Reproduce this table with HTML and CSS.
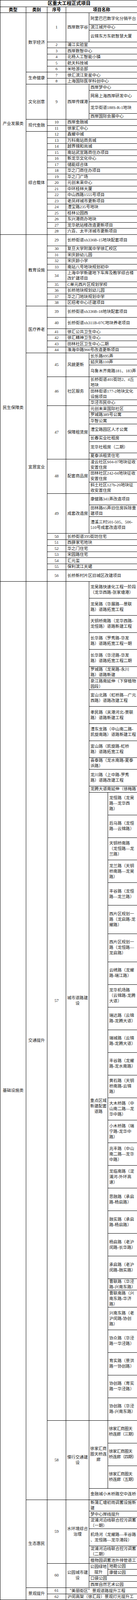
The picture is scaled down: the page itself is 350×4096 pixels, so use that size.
FILE: index.html
```html
<!DOCTYPE html>
<html lang="zh-CN">
<head>
<meta charset="utf-8">
<title>区重大工程正式项目</title>
<link rel="stylesheet" href="styles.css">
</head>
<body>
<table class="sheet">
<colgroup><col class="w1"><col class="w2"><col class="w3"><col class="w4"><col class="w5"><col class="w6"></colgroup>
<tbody>
<tr class="rt"><td colspan="6" class="title">区重大工程正式项目</td></tr>
<tr class="rh"><th>类型</th><th>类别</th><th>序号</th><th colspan="3">项目名称</th></tr>

<tr class="r2"><td rowspan="33" class="c">产业发展类</td><td rowspan="8" class="c">数字经济</td><td rowspan="3" class="c">1</td><td rowspan="3">西岸数字谷</td><td colspan="2">阿里巴巴数字化分销平台</td></tr>
<tr class="r1"><td colspan="2">滨江城开中心</td></tr>
<tr class="r2"><td colspan="2">云锦东方东航智慧大厦</td></tr>
<tr class="r1"><td class="c">2</td><td colspan="3">浦江实验室</td></tr>
<tr class="r1"><td class="c">3</td><td colspan="3">西岸数智中心</td></tr>
<tr class="r1"><td class="c">4</td><td colspan="3">北杨人工智能小镇</td></tr>
<tr class="r1"><td class="c">5</td><td colspan="3">航天科技城</td></tr>
<tr class="r1"><td class="c">6</td><td colspan="3">米哈游总部</td></tr>
<tr class="r1"><td rowspan="2" class="c">生命健康</td><td class="c">7</td><td colspan="3">徐汇滨江复星中心</td></tr>
<tr class="r1"><td class="c">8</td><td colspan="3">上海国际医学科创中心</td></tr>
<tr class="r1"><td rowspan="4" class="c">文化创意</td><td rowspan="4" class="c">9</td><td rowspan="4">西岸传媒港</td><td colspan="2">西岸梦中心</td></tr>
<tr class="r2"><td colspan="2">网易上海西岸研发中心</td></tr>
<tr class="r2"><td colspan="2">龙华街道188S-R-1地块</td></tr>
<tr class="r1"><td colspan="2">西岸国际会展中心</td></tr>
<tr class="r1"><td rowspan="2" class="c">现代金融</td><td class="c">10</td><td colspan="3">西岸金融城</td></tr>
<tr class="r1"><td class="c">11</td><td colspan="3">徐家汇中心</td></tr>
<tr class="r1"><td rowspan="17" class="c">综合载体</td><td class="c">12</td><td colspan="3">鑫耀中城</td></tr>
<tr class="r1"><td class="c">13</td><td colspan="3">万科南站商务城</td></tr>
<tr class="r1"><td class="c">14</td><td colspan="3">越界锦和尚城</td></tr>
<tr class="r1"><td class="c">15</td><td colspan="3">南站武宣路商住办项目</td></tr>
<tr class="r1"><td class="c">16</td><td colspan="3">新龙华文化中心</td></tr>
<tr class="r1"><td class="c">17</td><td colspan="3">储能综合体</td></tr>
<tr class="r1"><td class="c">18</td><td colspan="3">华之门商住办项目</td></tr>
<tr class="r1"><td class="c">19</td><td colspan="3">华之门广场</td></tr>
<tr class="r1"><td class="c">20</td><td colspan="3">元创未来中心</td></tr>
<tr class="r1"><td class="c">21</td><td colspan="3">中环桂林大厦</td></tr>
<tr class="r1"><td class="c">22</td><td colspan="3">中山西路1555号项目</td></tr>
<tr class="r1"><td class="c">23</td><td colspan="3">老凤祥城市更新项目</td></tr>
<tr class="r1"><td class="c">24</td><td colspan="3">漕宝路235号地块</td></tr>
<tr class="r1"><td class="c">25</td><td colspan="3">桂林公园西</td></tr>
<tr class="r1"><td class="c">26</td><td colspan="3">东兴港商办地块</td></tr>
<tr class="r1"><td class="c">27</td><td colspan="3">龙华航站楼改造更新项目</td></tr>
<tr class="r1"><td class="c">28</td><td colspan="3">六百、太平洋城市更新项目</td></tr>

<tr class="r2"><td rowspan="42" class="c">民生保障类</td><td rowspan="10" class="c">教育设施</td><td class="c">29</td><td colspan="3">长桥街道xh336B-15地块配套项目</td></tr>
<tr class="r1"><td class="c">30</td><td colspan="3">复旦大学附属中学徐汇校区</td></tr>
<tr class="r1"><td class="c">31</td><td colspan="3">宋庆龄幼儿园</td></tr>
<tr class="r1"><td class="c">32</td><td colspan="3">宋庆龄小学</td></tr>
<tr class="r1"><td class="c">33</td><td colspan="3">南站八号地块规划初中</td></tr>
<tr class="r2"><td class="c">34</td><td colspan="3">上海中学新建地下车库及教学综合楼<br>改扩建项目</td></tr>
<tr class="r1"><td class="c">35</td><td colspan="3">C单元西片区规划学校</td></tr>
<tr class="r1"><td class="c">36</td><td colspan="3">长桥地块规划幼儿园</td></tr>
<tr class="r1"><td class="c">37</td><td colspan="3">华之门地块规划中学</td></tr>
<tr class="r1"><td class="c">38</td><td colspan="3">区招考中心迁建项目</td></tr>
<tr class="r2"><td rowspan="6" class="c">医疗养老</td><td class="c">39</td><td colspan="3">长桥街道xh336B-18地块配套项目</td></tr>
<tr class="r2"><td class="c">40</td><td colspan="3">长桥街道xh311B-07C地块养老项目</td></tr>
<tr class="r1"><td class="c">41</td><td colspan="3">徐汇公共卫生中心</td></tr>
<tr class="r1"><td class="c">42</td><td colspan="3">徐汇精神卫生中心</td></tr>
<tr class="r1"><td class="c">43</td><td colspan="3">田林社区卫生中心二期</td></tr>
<tr class="r1"><td class="c">44</td><td colspan="3">淮海中路966号改造更新项目</td></tr>
<tr class="r1"><td rowspan="26" class="c">宜居宜业</td><td rowspan="3" class="c">45</td><td rowspan="3">风貌更新</td><td colspan="2">长乐路695弄</td></tr>
<tr class="r1"><td colspan="2">延庆路110弄</td></tr>
<tr class="r2"><td colspan="2">乌鲁木齐南路181、183弄</td></tr>
<tr class="r2"><td rowspan="3" class="c">46</td><td rowspan="3">社区服务</td><td colspan="2">长桥街道401街坊2、4丘<br>地块</td></tr>
<tr class="r2"><td colspan="2">田林街道177-2地块文化<br>设施项目</td></tr>
<tr class="r1"><td colspan="2">华泾市民中心</td></tr>
<tr class="r1"><td rowspan="7" class="c">47</td><td rowspan="7">保障租赁房</td><td colspan="2">元创未来国际社区</td></tr>
<tr class="r1"><td colspan="2">罗城路389号公寓</td></tr>
<tr class="r1"><td colspan="2">华智公寓</td></tr>
<tr class="r2"><td colspan="2">漕宝路园区人才公寓</td></tr>
<tr class="r1"><td colspan="2">长春实业社租房</td></tr>
<tr class="r2"><td colspan="2">龙华社租房（二期）</td></tr>
<tr class="r1"><td colspan="2">夏泰浜租赁住宅</td></tr>
<tr class="r2"><td rowspan="3" class="c">48</td><td rowspan="3">配套商品房</td><td colspan="2">凌云社区S04-07地块征收<br>安置住房</td></tr>
<tr class="r2"><td colspan="2">田林社区242-04地块征收<br>安置住房</td></tr>
<tr class="r2"><td colspan="2">斜土社区127b-20地块征<br>收安置住房</td></tr>
<tr class="r2"><td rowspan="3" class="c">49</td><td rowspan="3">成套改造房</td><td colspan="2">康健路341弄改造项目</td></tr>
<tr class="r2"><td colspan="2">田林路65弄旧住房拆除重<br>建项目</td></tr>
<tr class="r3"><td colspan="2">漕溪三村501-505、506-<br>510号成套改造项目</td></tr>
<tr class="r1"><td class="c">50</td><td colspan="3">长桥街道395街坊住宅</td></tr>
<tr class="r1"><td class="c">51</td><td colspan="3">西薛家宅地块</td></tr>
<tr class="r1"><td class="c">52</td><td colspan="3">华之门住宅</td></tr>
<tr class="r1"><td class="c">53</td><td colspan="3">宋园路住宅</td></tr>
<tr class="r1"><td class="c">54</td><td colspan="3">汇元玺</td></tr>
<tr class="r1"><td class="c">55</td><td colspan="3">保利滨江天珺</td></tr>
<tr class="r2"><td class="c">56</td><td colspan="3">长桥新村片区旧城区改建项目</td></tr>

<tr class="r3"><td rowspan="58" class="c">基础设施类</td><td rowspan="46" class="c">交通提升</td><td rowspan="42" class="c">57</td><td rowspan="42" class="c">城市道路建<br>设</td><td colspan="2">龙吴路快速化工程一阶段<br>（龙华西路-张家塘港）</td></tr>
<tr class="r3"><td colspan="2">龙吴路（华展路—景联<br>路）道路拓宽工程</td></tr>
<tr class="r3"><td colspan="2">天钥桥南路（龙华西路-<br>龙恒路）道路新建工程</td></tr>
<tr class="r3"><td colspan="2">长华路（罗秀路-华发<br>路）道路拓宽工程一期</td></tr>
<tr class="r3"><td colspan="2">长华路（华泾路-华发<br>路）道路拓宽工程二期</td></tr>
<tr class="r2"><td colspan="2">罗城路（龙吴路-永川<br>路）道路新建</td></tr>
<tr class="r2"><td colspan="2">泉江路南延伸（下穿植物<br>园段）</td></tr>
<tr class="r3"><td colspan="2">宜山北路（虹桥路—广元<br>西路）道路改建工程</td></tr>
<tr class="r3"><td colspan="2">孝民路（关港河北-景联<br>路）道路新建工程</td></tr>
<tr class="r3"><td colspan="2">漕东支路（中山南二路-<br>凯旋南路）道路新建工程</td></tr>
<tr class="r3"><td colspan="2">宜山路（凯旋路-虹桥<br>路）道路拓宽工程</td></tr>
<tr class="r2"><td colspan="2">喜泰路（龙水南路-夏泰<br>浜路）</td></tr>
<tr class="r3"><td colspan="2">龙川路（上中路-罗秀<br>路）道路改建工程</td></tr>
<tr class="r1"><td colspan="2">龙腾大道南延伸（徐梅路</td></tr>
<tr class="r4"><td rowspan="28" class="c">重点区域<br>新建配套<br>道路</td><td>龙恒路（龙吴<br>路—龙华西<br>路）</td></tr>
<tr class="r4"><td>后马路（龙恒<br>路—云锦路）</td></tr>
<tr class="r4"><td>天钥桥南路<br>（龙恒路—龙<br>兰路）</td></tr>
<tr class="r4"><td>龙兰路（天钥<br>桥南路—龙吴<br>路）</td></tr>
<tr class="r4"><td>丰谷路（龙恒<br>路—龙兰路）</td></tr>
<tr class="r5"><td>西片区规划一<br>路（龙启路-龙<br>耀路）</td></tr>
<tr class="r5"><td>西片区规划一<br>路（龙恒路—<br>龙启路）</td></tr>
<tr class="r4"><td>云绣路（龙耀<br>路-瑞江路）</td></tr>
<tr class="r4"><td>龙华机场路<br>（云锦路-龙腾<br>大道）</td></tr>
<tr class="r4"><td>瑞达路（云锦<br>路-龙腾大道）</td></tr>
<tr class="r4"><td>瑞城路（云锦<br>路-龙腾大道）</td></tr>
<tr class="r4"><td>丰谷路（龙耀<br>路-龙水南路）</td></tr>
<tr class="r4"><td>黄石路（天钥<br>桥南路-云锦<br>路）</td></tr>
<tr class="r4"><td>大木桥路（中<br>山南二路—龙<br>华中路）</td></tr>
<tr class="r4"><td>小木桥路（瑞<br>宁路-龙华中<br>路）</td></tr>
<tr class="r4"><td>兆丰路（中山<br>南二路—龙华<br>中路）</td></tr>
<tr class="r4"><td>龙临南路（淀<br>浦河-外环高<br>速）</td></tr>
<tr class="r4"><td>思融路（承启<br>路-杨启路）</td></tr>
<tr class="r4"><td>融实路（承启<br>路-杨启路）</td></tr>
<tr class="r4"><td>杨启路（老沪<br>闵路-长华路）</td></tr>
<tr class="r4"><td>承启路（老沪<br>闵路-融实路）</td></tr>
<tr class="r2"><td>曹联路（华泾<br>路-兴南东路）</td></tr>
<tr class="r3"><td>曹联南路（兴<br>南东路-华济<br>路）</td></tr>
<tr class="r4"><td>兴南东路（老<br>沪闵路-协创<br>路）</td></tr>
<tr class="r4"><td>协众路（华泾<br>路一华泾路）</td></tr>
<tr class="r4"><td>育实路（景洪<br>路一协创路）</td></tr>
<tr class="r4"><td>协创路（育实<br>路一华泾路）</td></tr>
<tr class="r4"><td>协创路（华泾<br>路-兴南东路）</td></tr>
<tr class="r4"><td rowspan="4" class="c">58</td><td rowspan="4" class="c">慢行交通建<br>设</td><td rowspan="3" class="c">徐家汇商<br>圈天桥连<br>廊</td><td class="tight">徐家汇商圈天<br>桥连廊（三期）</td></tr>
<tr class="r4"><td class="tight">徐家汇商圈天<br>桥连廊（四期）</td></tr>
<tr class="r4"><td class="tight">徐家汇商圈天<br>桥连廊（五期）</td></tr>
<tr class="r2"><td colspan="2">金融城小木桥路空中连桥</td></tr>
<tr class="r2"><td rowspan="10" class="c">生态惠民</td><td rowspan="6" class="c">59</td><td rowspan="6" class="c">水环境综合<br>治理</td><td colspan="2">新蒲汇塘初雨调蓄设施新<br>建</td></tr>
<tr class="r1"><td colspan="2">梦中心岸线提升</td></tr>
<tr class="r2"><td colspan="2">淀浦河沿线联合控污调蓄<br>（一期）</td></tr>
<tr class="r3"><td colspan="2">机场河（龙耀路—丰谷路<br>、龙恒路—龙华港段）</td></tr>
<tr class="r2"><td colspan="2">淀浦河沿线联合控污调蓄<br>（二期）</td></tr>
<tr class="r1"><td colspan="2">植物园调蓄池外排管道工</td></tr>
<tr class="r1"><td rowspan="4" class="c">60</td><td rowspan="4" class="c">公园城市建<br>设</td><td rowspan="2" class="c">公园绿地<br>提升</td><td>地勘公园</td></tr>
<tr class="r1"><td>康健公园</td></tr>
<tr class="r1"><td colspan="2">口袋公园</td></tr>
<tr class="r1"><td colspan="2">西岸自然艺术公园</td></tr>
<tr class="r1"><td rowspan="2" class="c">景观提升</td><td class="c">61</td><td colspan="3"><span class="q">“</span>美丽街区<span class="q">”</span>景观道路提升工程</td></tr>
<tr class="r1"><td class="c">62</td><td colspan="3">沪闵高架（徐汇段）景观灯光提升工</td></tr>
</tbody>
</table>
</body>
</html>
```

FILE: styles.css
```css
html, body {
  margin: 0;
  padding: 0;
  background: #ffffff;
}

body {
  width: 350px;
}

.sheet {
  width: 350px;
  table-layout: fixed;
  border-collapse: collapse;
  font-family: "Liberation Serif", "Noto Sans CJK SC", serif;
  font-size: 10.6px;
  line-height: 14px;
  color: #1a1a1a;
  text-spacing-trim: space-all;
}

.w1 { width: 66px; }
.w2 { width: 54px; }
.w3 { width: 48px; }
.w4 { width: 59px; }
.w5 { width: 48px; }
.w6 { width: 75px; }

.sheet td,
.sheet th {
  border: 1px solid #000000;
  padding: 0 1px 0 3px;
  white-space: nowrap;
  overflow: hidden;
  vertical-align: middle;
  text-align: left;
}

.sheet .c {
  text-align: center;
  padding: 0 1px;
}

.sheet .tight {
  padding: 0 0 0 2px;
  letter-spacing: -0.6px;
}

.sheet .title {
  text-align: center;
  font-weight: bold;
  font-size: 12.2px;
  color: #000000;
}

.sheet th {
  text-align: center;
  font-weight: bold;
  font-size: 11px;
  color: #000000;
  padding: 0 1px;
}

.rt { height: 16.7px; }
.rh { height: 15.8px; }
.r1 { height: 15.5px; }
.r2 { height: 29.45px; }
.r3 { height: 43.6px; }
.r4 { height: 57.95px; }
.r5 { height: 72.3px; }

.q {
  font-family: "Noto Sans CJK SC", sans-serif;
  font-feature-settings: "fwid";
}
```
